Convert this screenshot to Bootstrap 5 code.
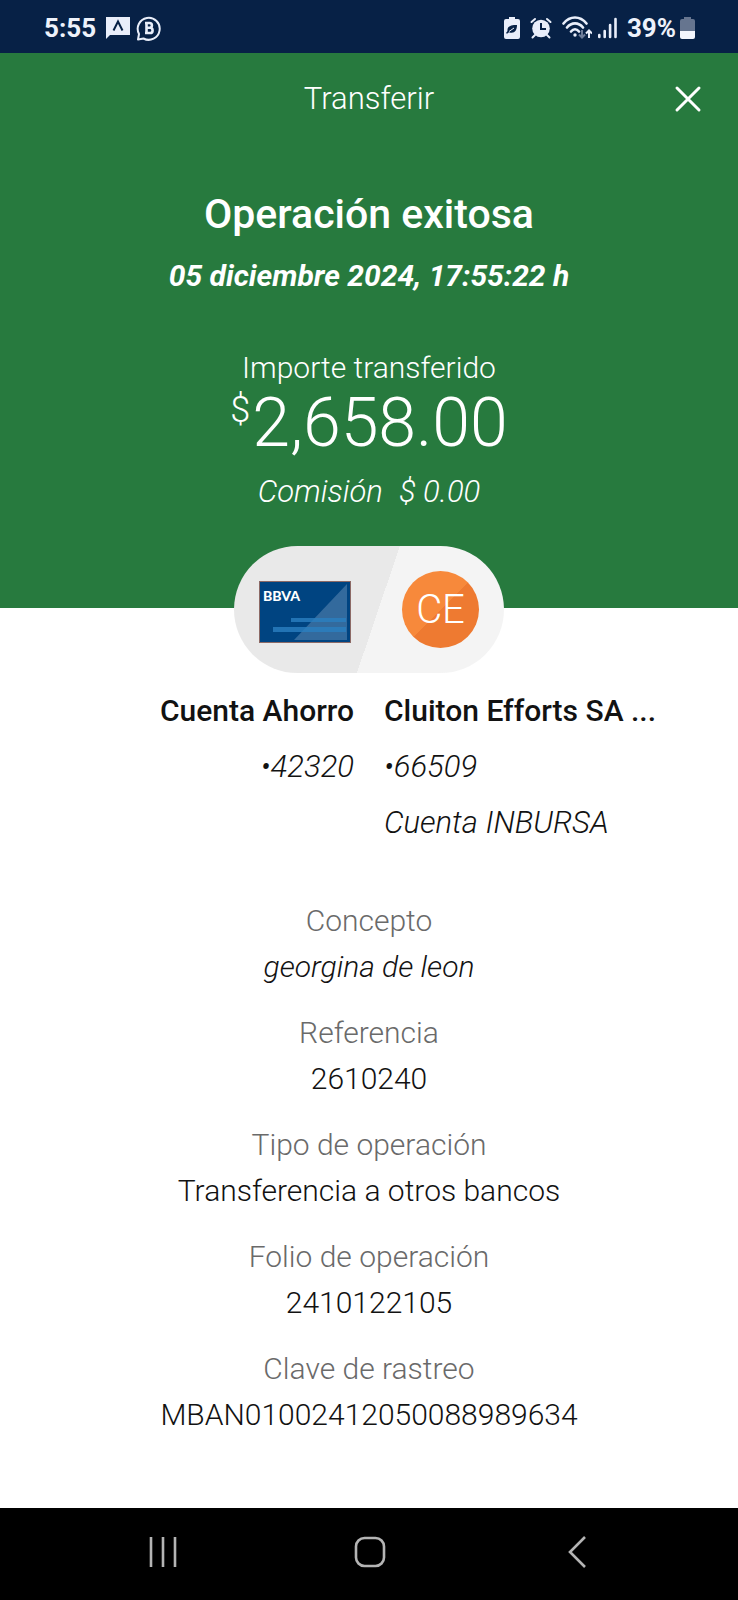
<!DOCTYPE html>
<html lang="es">
<head>
<meta charset="utf-8">
<meta name="viewport" content="width=device-width, initial-scale=1">
<title>Transferir</title>
<link href="https://cdn.jsdelivr.net/npm/bootstrap@5.3.0/dist/css/bootstrap.min.css" rel="stylesheet">
<style>
  body { font-family: Roboto, "Liberation Sans", sans-serif; font-size: 30px; font-weight: 300; line-height: 40px; color: #121212; background: #fff; }
  svg { display: block; flex: none; }
  .status-bar { height: 53px; padding: 2px 43px 0 44px; background: #072146; color: #eef2fb; font-size: 26px; font-weight: 700; }
  .status-icons { gap: 6px; }
  .hero { background: #277a3e; color: #fff; padding-bottom: 96px; }
  .title-bar { padding: 26px 36px 0; display: grid; grid-template-columns: 28px 1fr 28px; }
  .title-bar h1 { grid-column: 2; margin: 0; line-height: inherit; font-size: 31px; font-weight: 300; }
  .close-btn { all: unset; cursor: pointer; display: flex; align-items: center; }
  .headline { margin: 71px 0 0; font-size: 41px; font-weight: 500; line-height: 48px; }
  .stamp { margin-top: 18px; font-weight: 700; }
  .amount-label { margin-top: 52px; }
  .currency { font-size: 36px; margin-right: 2px; }
  .amount-row { padding-top: 2px; }
  .amount { font-size: 68px; line-height: 66px; }
  .fee { margin-top: 16px; column-gap: 16px; font-size: 31px; }
  .pill { width: 270px; height: 127px; margin-top: -62px; padding: 0 25px; border-radius: 64px; background: linear-gradient(108.7deg, #e9e9e9 53%, #f4f4f4 53%); }
  .card-art { margin-top: 4px; }
  .avatar { width: 77px; height: 77px; color: #fff; font-size: 40px; background: linear-gradient(135deg, #f7893b 50%, #ee7a31 50%); }
  .accounts { margin-top: 18px; }
  .account { padding: 0 15px; display: flex; flex-direction: column; gap: 16px; }
  .account strong { font-weight: 500; }
  .account em { font-size: 31px; }
  .details { margin: 58px 0 0; padding-bottom: 32px; display: flex; flex-direction: column; gap: 26px; }
  .details dt { font-weight: 300; color: #6a6a6a; margin-bottom: 6px; }
  .details dd { margin: 0; overflow-wrap: anywhere; }
  .system-nav { height: 92px; padding: 0 58px 4px 60px; background: #000; }
  .system-nav button { all: unset; flex: 1; cursor: pointer; display: flex; justify-content: center; align-items: center; }
</style>
</head>
<body class="d-flex flex-column min-vh-100">

<div class="status-bar d-flex align-items-center justify-content-between">
  <div class="status-icons d-flex align-items-center">
    <span class="me-1">5:55</span>
    <svg width="24" height="24" viewBox="0 0 24 24" aria-hidden="true"><path fill="#e9eefa" d="M0 1h24v18H4l-4 4z"/><path fill="none" stroke="#072146" stroke-width="2" d="M7.500 14.500 12 5.500l4.500 9"/></svg>
    <svg width="26" height="26" viewBox="0 0 26 26" fill="none" stroke="#e9eefa" aria-hidden="true"><path stroke-width="2" stroke-linejoin="round" d="M2 24.500l1-5.500A11 11 0 1 1 7.500 23.500z"/><path stroke-width="2.600" d="M10.500 8v10M9 8h4.500a2.400 2.400 0 0 1 0 4.800H10h4a2.600 2.600 0 0 1 0 5.200H9"/></svg>
  </div>
  <div class="status-icons d-flex align-items-center">
    <svg width="16" height="22" viewBox="0 0 16 22" aria-hidden="true"><path fill="#e9eefa" d="M5 0h6v2h3q2 0 2 2v16q0 2-2 2H2q-2 0-2-2V4q0-2 2-2h3z"/><path fill="#072146" d="M13 8C7 8 3 9 3.500 14L2 16l1 .700 2-1.500C10 17 13 14 13 8z"/><path stroke="#e9eefa" d="M5 14.500 10 11"/></svg>
    <svg class="ms-1" width="22" height="22" viewBox="0 0 22 22" fill="none" stroke="#e9eefa" stroke-width="2" stroke-linecap="round" aria-hidden="true"><circle cx="11" cy="11.500" r="8.800" fill="#e9eefa" stroke="none"/><path d="M1.500 5 5 2M17 2l3.500 3M5 18l-2.500 2.500M17 18l2.500 2.500"/><path stroke="#072146" stroke-linecap="butt" d="M11 6v6h5"/></svg>
    <svg class="ms-1" width="30" height="24" viewBox="0 0 30 24" fill="none" stroke="#e9eefa" stroke-width="2.600" stroke-linecap="round" aria-hidden="true"><path d="M1.500 7.500C8-.500 18-.500 24.500 7.500M5 11.500c4.500-5.500 11.500-5.500 16 0M9 15.500c2.500-3 5.500-3 8 0"/><circle cx="13" cy="19" r="1.700" fill="#e9eefa" stroke="none"/><g stroke-width="2" stroke-linecap="butt"><path stroke="#6b7b98" d="M20 14v7.500m-3-3 3 3 3-3"/><path d="M27 22v-7.500m-3 3 3-3 3 3"/></g></svg>
    <svg width="19" height="22" viewBox="0 0 19 22" stroke="#e9eefa" stroke-width="2.600" stroke-linecap="round" aria-hidden="true"><path d="M1.300 18v2M6.700 14v6M12.100 8v12M17.500 2v18"/></svg>
    <span class="d-flex align-items-center gap-1 ms-1"><span>39%</span>
    <svg width="15" height="22" viewBox="0 0 15 22" aria-hidden="true"><path fill="#66758f" d="M4 0h7v2h2q2 0 2 2v11H0V4q0-2 2-2h2z"/><path fill="#f3f6fd" d="M0 14h15v6q0 2-2 2H2q-2 0-2-2z"/></svg></span>
  </div>
</div>

<main class="flex-grow-1">
  <header class="hero text-center">
    <div class="title-bar">
      <h1>Transferir</h1>
      <button class="close-btn" type="button" aria-label="Cerrar"><svg width="28" height="28" viewBox="0 0 28 28" stroke="#fff" stroke-width="3" stroke-linecap="round"><path d="M3 3l22 22M25 3 3 25"/></svg></button>
    </div>
    <h2 class="headline">Operación exitosa</h2>
    <div class="stamp fst-italic">05 diciembre 2024, 17:55:22 h</div>
    <div class="amount-label">Importe transferido</div>
    <div class="amount-row d-flex justify-content-center"><span class="currency">$</span><span class="amount">2,658.00</span></div>
    <div class="fee fst-italic d-flex justify-content-center"><span>Comisión</span><span>$ 0.00</span></div>
  </header>

  <div class="pill mx-auto d-flex align-items-center justify-content-between">
    <svg class="card-art" width="92" height="62" viewBox="0 0 92 62" role="img" aria-label="Tarjeta BBVA">
      <rect x=".5" y=".5" width="91" height="61" fill="#004481" stroke="#8c6a66"/>
      <path fill="#336a9d" d="M88 3v56H35z"/>
      <path fill="#2a7fc1" fill-opacity=".8" d="M32 37h55v4H32zM14 46h73v5H14z"/>
      <text x="4" y="20" fill="#fff" font-family="Lato, sans-serif" font-size="14" font-weight="900">BBVA</text>
    </svg>
    <div class="avatar rounded-circle d-flex align-items-center justify-content-center">CE</div>
  </div>

  <section class="accounts row g-0">
    <div class="account col-6 text-end"><strong>Cuenta Ahorro</strong><em>•42320</em></div>
    <div class="account col-6"><strong class="text-truncate">Cluiton Efforts SA ...</strong><em>•66509</em><em>Cuenta INBURSA</em></div>
  </section>

  <dl class="details text-center">
    <div><dt>Concepto</dt><dd class="fst-italic">georgina de leon</dd></div>
    <div><dt>Referencia</dt><dd>2610240</dd></div>
    <div><dt>Tipo de operación</dt><dd>Transferencia a otros bancos</dd></div>
    <div><dt>Folio de operación</dt><dd>2410122105</dd></div>
    <div><dt>Clave de rastreo</dt><dd>MBAN01002412050088989634</dd></div>
  </dl>
</main>

<nav class="system-nav d-flex" aria-label="Navegación del sistema">
  <button type="button" aria-label="Recientes"><svg width="30" height="32" viewBox="0 0 30 32" stroke="#b4b4b4" stroke-width="2.600"><path d="M3 1v30M15 1v30M27 1v30"/></svg></button>
  <button type="button" aria-label="Inicio"><svg width="32" height="32" viewBox="0 0 32 32" fill="none" stroke="#b4b4b4" stroke-width="2.600"><rect x="2" y="2" width="28" height="28" rx="8.500"/></svg></button>
  <button type="button" aria-label="Atrás"><svg width="18" height="32" viewBox="0 0 18 32" fill="none" stroke="#b4b4b4" stroke-width="2.600"><path d="M17 1 2 16l15 15"/></svg></button>
</nav>

<script src="https://cdn.jsdelivr.net/npm/bootstrap@5.3.0/dist/js/bootstrap.bundle.min.js"></script>
</body>
</html>
